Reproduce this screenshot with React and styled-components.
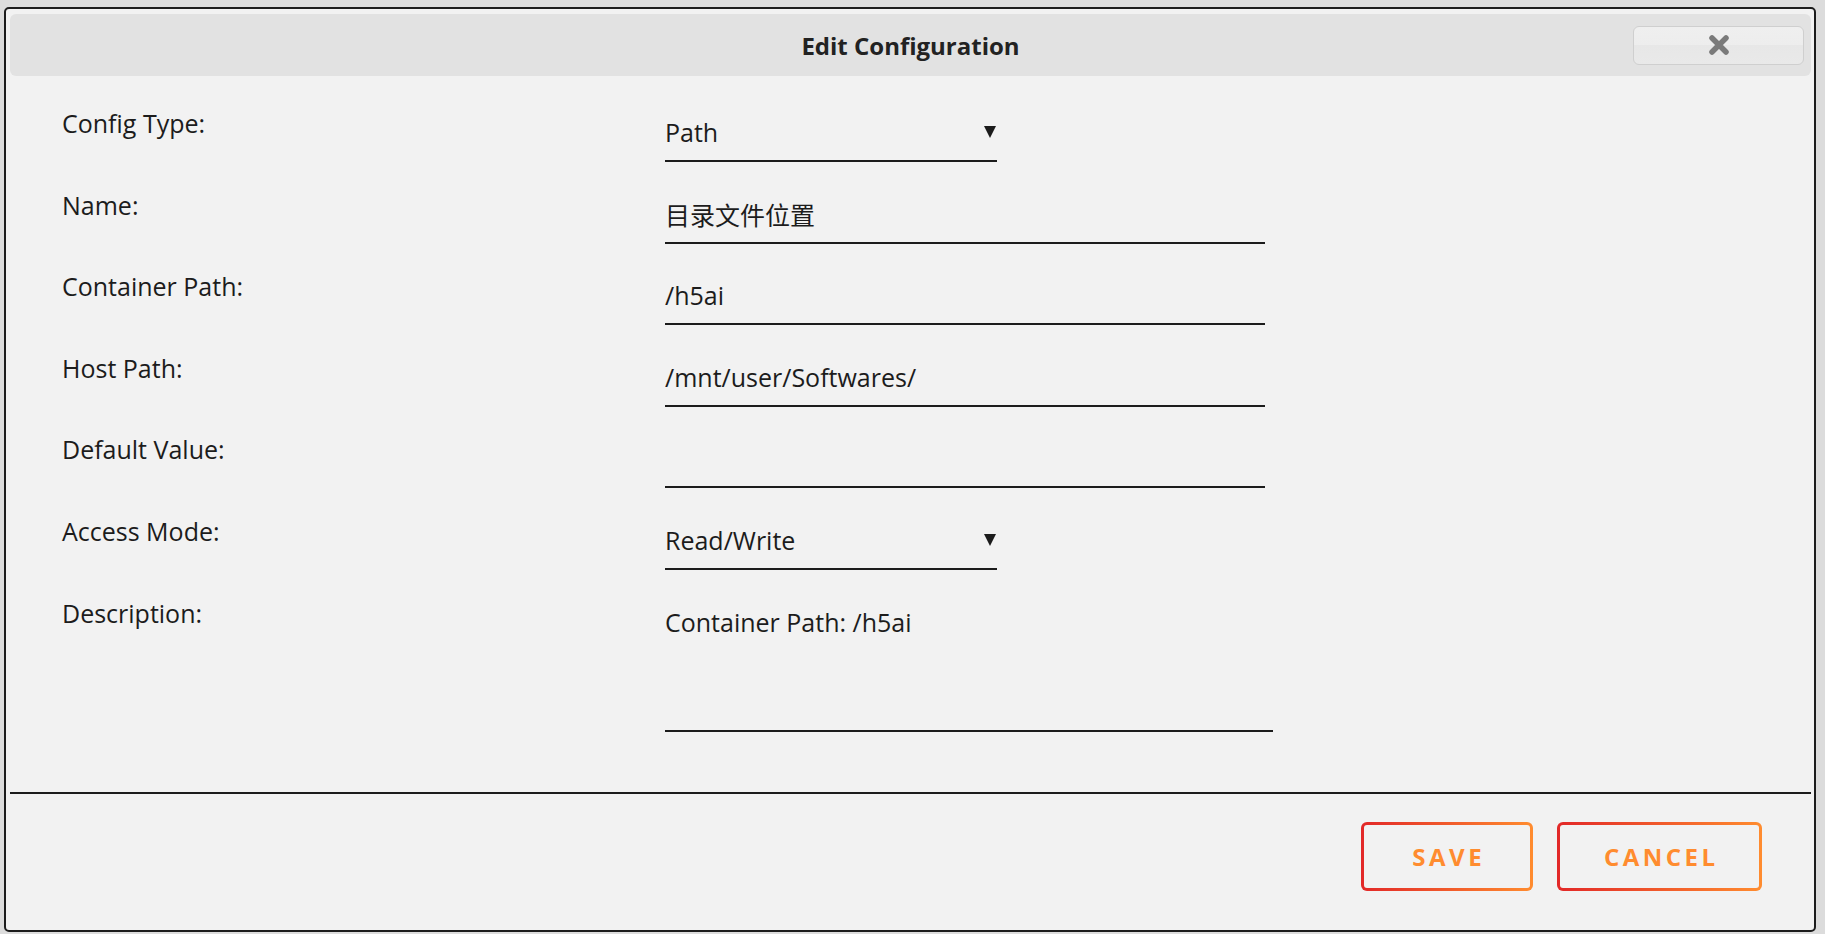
import React from 'react';
import styled, { createGlobalStyle } from 'styled-components';

const GlobalStyle = createGlobalStyle`
  html, body {
    margin: 0;
    padding: 0;
    background: #dcdcdc;
    font-family: "Open Sans", "Noto Sans CJK SC", sans-serif;
    color: #1c1c1c;
  }
  * { box-sizing: border-box; }
`;

const Dialog = styled.div`
  margin: 7px 0 0 4px;
  width: 1812px;
  border: 2px solid #1c1c1c;
  border-radius: 5px;
  background: #f2f2f2;
  padding: 5px 3px 0 4px;
`;

const TitleBar = styled.div`
  display: grid;
  grid-template-columns: 1fr auto 1fr;
  align-items: center;
  height: 62px;
  background: #e2e2e2;
  border-radius: 6px;
`;

const Title = styled.h1`
  grid-column: 2;
  margin: 0;
  font-size: 24px;
  font-weight: 700;
  color: #222;
`;

const CloseButton = styled.button`
  grid-column: 3;
  justify-self: end;
  margin-right: 7px;
  width: 171px;
  height: 39px;
  display: flex;
  align-items: center;
  justify-content: center;
  border: 1px solid #cfcfcf;
  border-radius: 6px;
  background: linear-gradient(#efefef 0%, #ededed 50%, #e7e7e7 50%, #e9e9e9 100%);
  padding: 0;
  cursor: pointer;
`;

const Form = styled.div`
  padding: 24px 0 0 52px;
`;

const Row = styled.div`
  display: grid;
  grid-template-columns: 603px 1fr;
  align-items: start;
  height: ${p => (p.$tall ? '142.4px' : '81.6px')};
`;

const Label = styled.div`
  font-size: 25px;
  line-height: 46px;
`;

const TextInput = styled.input`
  display: block;
  margin-top: 4px;
  width: 600px;
  height: 58px;
  padding: 0;
  border: none;
  border-bottom: 2px solid #1c1c1c;
  background: transparent;
  font-family: "Open Sans", "Noto Sans CJK SC", sans-serif;
  font-size: 25px;
  color: #1c1c1c;
  outline: none;
`;

const SelectBox = styled.div`
  margin-top: 4px;
  width: 332px;
  height: 58px;
  display: flex;
  align-items: center;
  justify-content: space-between;
  padding: 0 1px 0 0;
  border-bottom: 2px solid #1c1c1c;
  font-size: 25px;
  cursor: pointer;
`;

const TextArea = styled.textarea`
  display: block;
  margin-top: 4px;
  width: 608px;
  height: 138.4px;
  padding: 10px 0 0 0;
  border: none;
  border-bottom: 2px solid #1c1c1c;
  background: transparent;
  font-family: "Open Sans", "Noto Sans CJK SC", sans-serif;
  font-size: 25px;
  line-height: 36px;
  color: #1c1c1c;
  resize: none;
  outline: none;
`;

const Divider = styled.div`
  margin-top: 60px;
  height: 2px;
  background: #1c1c1c;
`;

const Footer = styled.div`
  display: flex;
  justify-content: flex-end;
  gap: 24px;
  padding: 28px 49px 39px 0;
`;

const ActionButton = styled.button`
  width: ${p => p.$w}px;
  height: 69px;
  padding: 0;
  border: 3px solid transparent;
  border-radius: 6px;
  background:
    linear-gradient(#f2f2f2, #f2f2f2) padding-box,
    linear-gradient(90deg, #e22828, #ff8c2f) border-box;
  color: #ff8c2f;
  font-family: "Open Sans", sans-serif;
  font-size: 24px;
  font-weight: 700;
  letter-spacing: 3.5px;
  text-indent: 3.5px;
  cursor: pointer;
`;

const Arrow = () => (
  <svg width="12" height="12" viewBox="0 0 12 12">
    <path d="M0 0 H12 L6 12 Z" fill="#1c1c1c" />
  </svg>
);

const CloseIcon = () => (
  <svg width="22" height="22" viewBox="0 0 22 22">
    <path d="M4 4 L18 18 M18 4 L4 18" stroke="#7a7a7a" strokeWidth="5.5" strokeLinecap="round" />
  </svg>
);

const fields = [
  { label: 'Config Type:', type: 'select', value: 'Path' },
  { label: 'Name:', value: '目录文件位置' },
  { label: 'Container Path:', value: '/h5ai' },
  { label: 'Host Path:', value: '/mnt/user/Softwares/' },
  { label: 'Default Value:', value: '' },
  { label: 'Access Mode:', type: 'select', value: 'Read/Write' },
];

export default function App() {
  return (
    <>
      <GlobalStyle />
      <Dialog>
        <TitleBar>
          <Title>Edit Configuration</Title>
          <CloseButton aria-label="close"><CloseIcon /></CloseButton>
        </TitleBar>

        <Form>
          {fields.map(f => (
            <Row key={f.label}>
              <Label>{f.label}</Label>
              {f.type === 'select' ? (
                <SelectBox>
                  <span>{f.value}</span>
                  <Arrow />
                </SelectBox>
              ) : (
                <TextInput type="text" defaultValue={f.value} />
              )}
            </Row>
          ))}
          <Row $tall>
            <Label>Description:</Label>
            <TextArea defaultValue="Container Path: /h5ai" />
          </Row>
        </Form>

        <Divider />
        <Footer>
          <ActionButton $w={172}>SAVE</ActionButton>
          <ActionButton $w={205}>CANCEL</ActionButton>
        </Footer>
      </Dialog>
    </>
  );
}
